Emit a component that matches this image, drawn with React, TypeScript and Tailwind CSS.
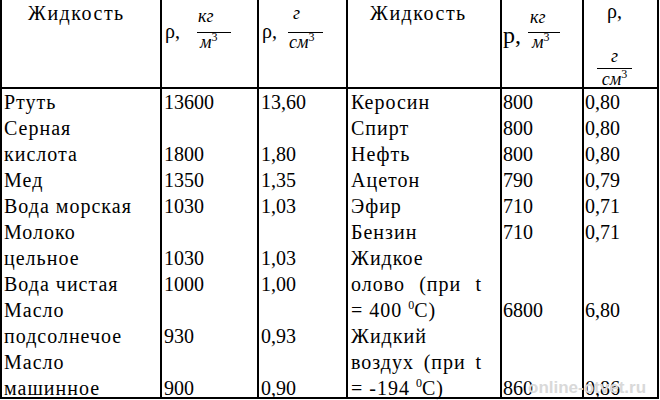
import React from "react";

const col1 = ["Ртуть", "Серная", "кислота", "Мед", "Вода морская", "Молоко", "цельное", "Вода чистая", "Масло", "подсолнечое", "Масло", "машинное"];
const col2 = ["13600", "", "1800", "1350", "1030", "", "1030", "1000", "", "930", "", "900"];
const col3 = ["13,60", "", "1,80", "1,35", "1,03", "", "1,03", "1,00", "", "0,93", "", "0,90"];
const col5 = ["800", "800", "800", "790", "710", "710", "", "", "6800", "", "", "860"];
const col6 = ["0,80", "0,80", "0,80", "0,79", "0,71", "0,71", "", "", "6,80", "", "", "0,86"];

function Lines({ items }: { items: string[] }) {
  return (
    <>
      {items.map((t, i) => (
        <div key={i} className="[font-family:'Liberation_Serif'] h-[26px] leading-[26px] whitespace-nowrap">
          {t === "" ? "\u00a0" : t}
        </div>
      ))}
    </>
  );
}

function Line({ children }: { children: React.ReactNode }) {
  return <div className="[font-family:'Liberation_Serif'] h-[26px] leading-[26px] whitespace-nowrap">{children}</div>;
}

function Sup() {
  return <sup className="[font-family:'Liberation_Serif'] text-[12px] relative top-[-8px] align-baseline tracking-normal">0</sup>;
}

function Frac({ num, den, w, numPl, denPl, numMt, lineMt }: { num: string; den: string; w: string; numPl: string; denPl: string; numMt: string; lineMt: string }) {
  return (
    <div className={`${w} flex flex-col italic text-[18px] [font-family:'Liberation_Serif']`}>
      <div className={`${numMt} ${numPl} h-[18px] leading-[18px]`}>{num}</div>
      <div className={`${lineMt} h-px bg-black`} />
      <div className={`${denPl} h-[18px] leading-[18px]`}>
        {den}
        <sup className="not-italic text-[12px] relative top-[-7px]">3</sup>
      </div>
    </div>
  );
}

export default function App() {
  return (
    <div className="w-[660px] h-[400px] bg-white text-black [font-family:'Liberation_Serif'] text-[20px]">
      <div className="relative grid grid-cols-[162px_97px_89px_154px_82px_75px] grid-rows-[89px_310px] [font-family:'Liberation_Serif']">
        <div className="border-l-2 border-r-2 border-b-2 border-black pl-[26px]">
          <div className="[font-family:'Liberation_Serif'] leading-[26px] tracking-[1.5px]">Жидкость</div>
        </div>
        <div className="border-r-2 border-b-2 border-black pl-[3px] flex items-start">
          <span className="[font-family:'Liberation_Serif'] w-[32px] mt-[18px] leading-[26px]">ρ,</span>
          <Frac num="кг" den="м" w="w-[34px]" numPl="pl-[1px]" denPl="pl-[3px]" numMt="mt-[7px]" lineMt="mt-[7px]" />
        </div>
        <div className="border-r-2 border-b-2 border-black pl-[3px] flex items-start">
          <span className="[font-family:'Liberation_Serif'] w-[26px] mt-[18px] leading-[26px]">ρ,</span>
          <Frac num="г" den="см" w="w-[35px]" numPl="pl-[5px]" denPl="pl-[1px]" numMt="mt-[4px]" lineMt="mt-[10px]" />
        </div>
        <div className="border-r-2 border-b-2 border-black pl-[22px]">
          <div className="[font-family:'Liberation_Serif'] leading-[26px] tracking-[1.5px]">Жидкость</div>
        </div>
        <div className="border-r-2 border-b-2 border-black pl-[1px] flex items-start">
          <span className="[font-family:'Liberation_Serif'] w-[25px] mt-[22px] leading-[26px] text-[24px]">р,</span>
          <Frac num="кг" den="м" w="w-[32px]" numPl="pl-[2px]" denPl="pl-[4px]" numMt="mt-[8px]" lineMt="mt-[6px]" />
        </div>
        <div className="border-r-2 border-b-2 border-black pr-[12px] flex flex-col items-center">
          <div className="[font-family:'Liberation_Serif'] mt-[1px] h-[20px] leading-[20px]">ρ,</div>
          <div className="w-[35px] flex flex-col items-center italic text-[18px] [font-family:'Liberation_Serif']">
            <div className="mt-[26px] h-[18px] leading-[18px]">г</div>
            <div className="mt-[3px] h-px w-[35px] bg-black" />
            <div className="mt-[1px] h-[18px] leading-[18px]">
              см<sup className="not-italic text-[12px] relative top-[-7px]">3</sup>
            </div>
          </div>
        </div>

        <div className="border-l-2 border-r-2 border-b-2 border-black pl-[2px] tracking-[1px]">
          <Lines items={col1} />
        </div>
        <div className="border-r-2 border-b-2 border-black pl-[2px]">
          <Lines items={col2} />
        </div>
        <div className="border-r-2 border-b-2 border-black pl-[2px]">
          <Lines items={col3} />
        </div>
        <div className="border-r-2 border-b-2 border-black pl-[3px] tracking-[1px]">
          <Lines items={["Керосин", "Спирт", "Нефть", "Ацетон", "Эфир", "Бензин", "Жидкое"]} />
          <Line>
            <div className="w-[131px] flex justify-between">
              <span>олово</span>
              <span>(при</span>
              <span>t</span>
            </div>
          </Line>
          <Line>
            = 400 <Sup />С)
          </Line>
          <Line>Жидкий</Line>
          <Line>
            <div className="w-[131px] flex justify-between">
              <span>воздух</span>
              <span>(при</span>
              <span>t</span>
            </div>
          </Line>
          <Line>
            = -194 <Sup />С)
          </Line>
        </div>
        <div className="border-r-2 border-b-2 border-black pl-[1px]">
          <Lines items={col5} />
        </div>
        <div className="border-r-2 border-b-2 border-black pl-[1px]">
          <Lines items={col6} />
        </div>

        <div className="absolute left-[528px] top-[379px] [font-family:'Liberation_Sans'] font-bold text-[17px] leading-[18px] text-[#d9d9d9] whitespace-nowrap">
          online-otvet.ru
        </div>
      </div>
    </div>
  );
}
